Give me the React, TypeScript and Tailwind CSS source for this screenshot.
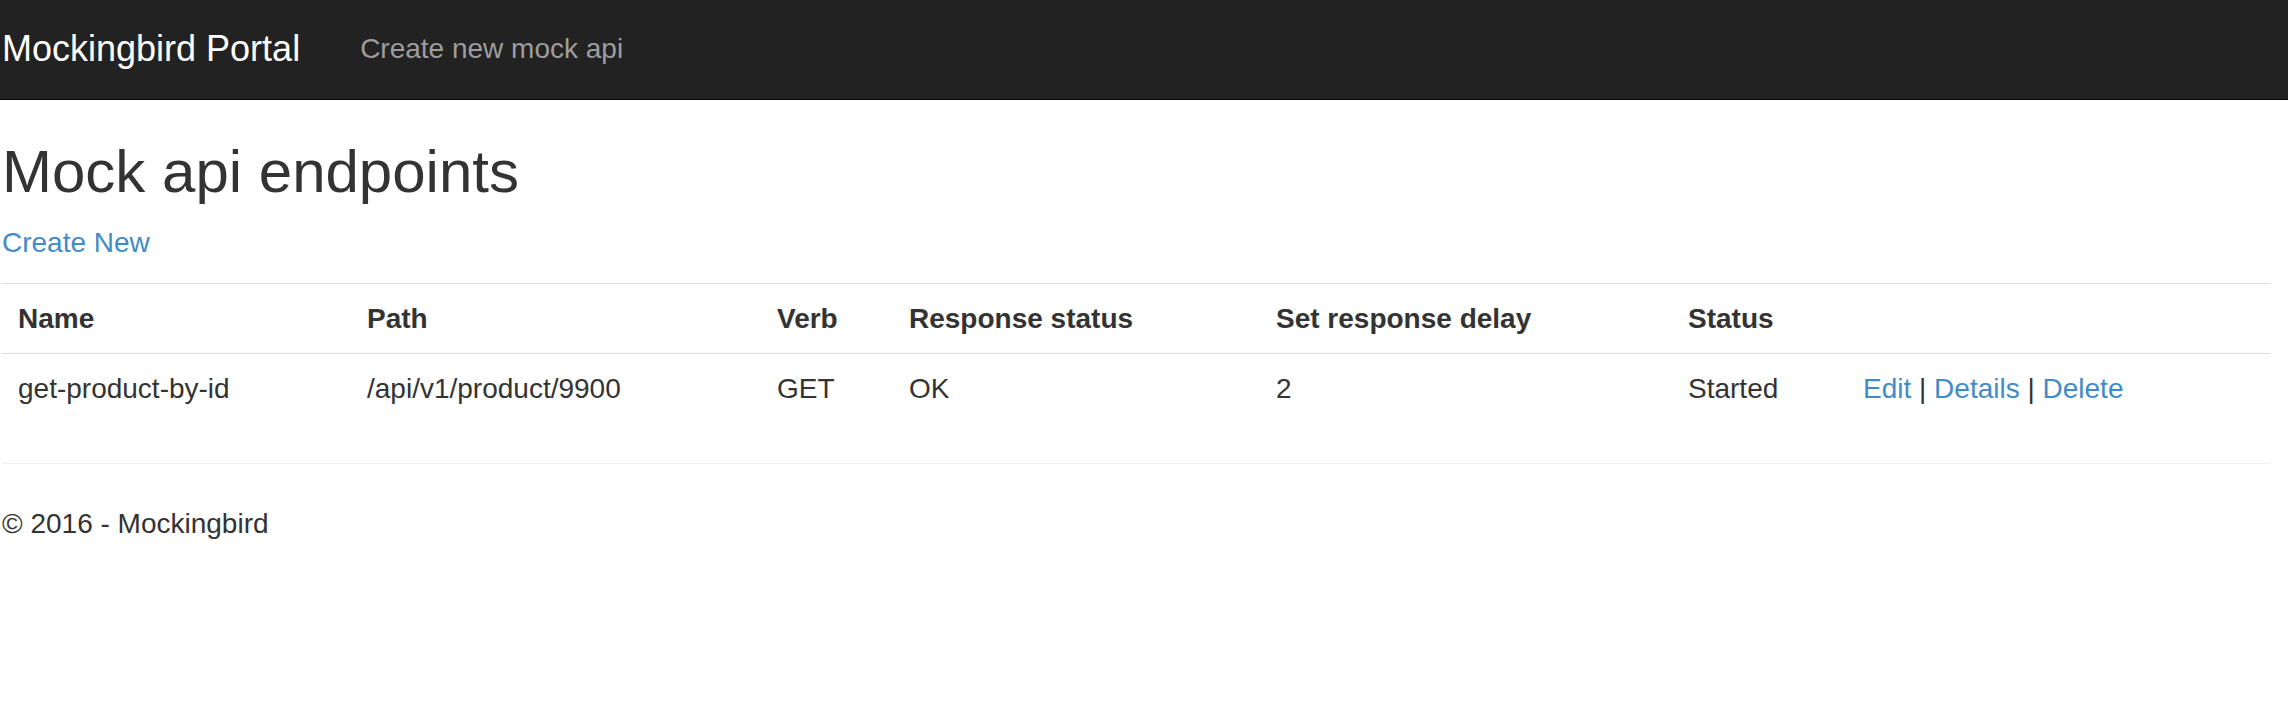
const columns = [
  { label: "Name", width: "w-[349px]" },
  { label: "Path", width: "w-[410px]" },
  { label: "Verb", width: "w-[132px]" },
  { label: "Response status", width: "w-[367px]" },
  { label: "Set response delay", width: "w-[412px]" },
  { label: "Status", width: "w-[175px]" },
  { label: "", width: "" },
];

const endpoints = [
  {
    name: "get-product-by-id",
    path: "/api/v1/product/9900",
    verb: "GET",
    status: "OK",
    delay: "2",
    state: "Started",
  },
];

const Navbar = () => {
  return (
    <nav className="h-[100px] bg-[#222222] border-b border-[#080808] flex items-start pt-[29px] pl-[2px]">
      <a href="#" className="text-[36px] leading-[40px] text-white pr-[30px]">
        Mockingbird Portal
      </a>
      <a href="#" className="text-[28px] leading-[40px] text-[#9d9d9d] px-[30px]">
        Create new mock api
      </a>
    </nav>
  );
};

const App = () => {
  return (
    <div className="min-h-[712px] bg-white text-[#333333] text-[28px] leading-[40px] font-['Liberation_Sans',Arial,sans-serif]">
      <Navbar />

      <main className="pl-[2px] pr-[18px]">
        <h2 className="mt-[39px] text-[60px] leading-[66px] font-medium">Mock api endpoints</h2>
        <p className="mt-[18px]">
          <a href="#" className="text-[#428bca]">Create New</a>
        </p>

        <table className="mt-[20px] w-full table-fixed border-collapse">
          <tbody>
            <tr className="border-t border-[#dddddd]">
              {columns.map((c) => (
                <th key={c.label} className={`${c.width} text-left font-bold px-4 pt-[15px] pb-[14px]`}>
                  {c.label}
                </th>
              ))}
            </tr>
            {endpoints.map((e) => (
              <tr key={e.name} className="border-t border-[#dddddd]">
                <td className="px-4 pt-[15px] pb-[14px]">{e.name}</td>
                <td className="px-4 pt-[15px] pb-[14px]">{e.path}</td>
                <td className="px-4 pt-[15px] pb-[14px]">{e.verb}</td>
                <td className="px-4 pt-[15px] pb-[14px]">{e.status}</td>
                <td className="px-4 pt-[15px] pb-[14px]">{e.delay}</td>
                <td className="px-4 pt-[15px] pb-[14px]">{e.state}</td>
                <td className="px-4 pt-[15px] pb-[14px] whitespace-nowrap">
                  <a href="#" className="text-[#428bca]">Edit</a> |{" "}
                  <a href="#" className="text-[#428bca]">Details</a> |{" "}
                  <a href="#" className="text-[#428bca]">Delete</a>
                </td>
              </tr>
            ))}
          </tbody>
        </table>

        <hr className="mt-[40px] border-0 border-t border-[#eeeeee]" />
        <footer>
          <p className="mt-[40px]">© 2016 - Mockingbird</p>
        </footer>
      </main>
    </div>
  );
};

export default App;
